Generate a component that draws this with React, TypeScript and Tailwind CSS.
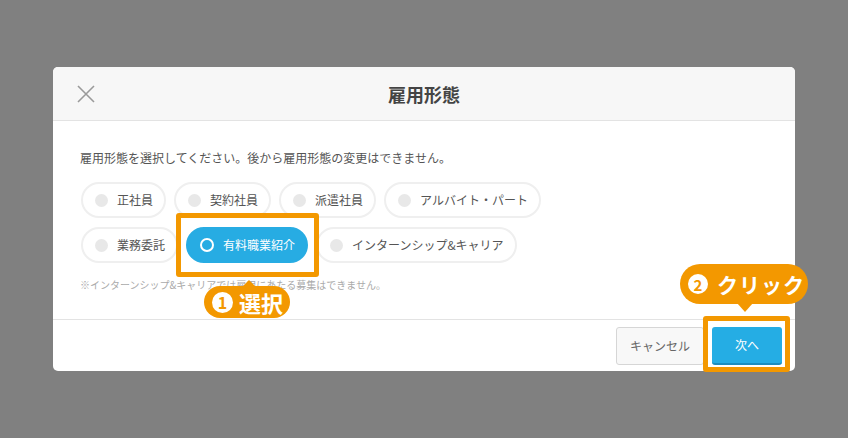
import React from "react";

const FONT = { fontFamily: '"Noto Sans CJK JP", "Noto Sans", sans-serif' };

function Pill({ label, selected = false }: { label: string; selected?: boolean }) {
  if (selected) {
    return (
      <div className="h-[36px] rounded-full border-2 border-[#27ace3] bg-[#27ace3] pl-[12px] pr-[11px] flex items-center gap-[9px] shrink-0">
        <span className="w-[14px] h-[14px] rounded-full border-2 border-white" />
        <span className="text-[12px] text-white whitespace-nowrap leading-none">{label}</span>
      </div>
    );
  }
  return (
    <div className="h-[36px] rounded-full border-2 border-[#efefef] bg-white pl-[12px] pr-[11px] flex items-center gap-[9px] shrink-0">
      <span className="w-[13px] h-[13px] rounded-full bg-[#e8e8e8]" />
      <span className="text-[12px] text-[#555] whitespace-nowrap leading-none">{label}</span>
    </div>
  );
}

export default function App() {
  return (
    <div className="relative w-[848px] h-[438px] bg-[#808080] overflow-hidden pt-[67px] pl-[53px]" style={FONT}>
      <div className="w-[742px] bg-white rounded-[5px] flex flex-col">
        {/* header */}
        <div className="h-[54px] bg-[#f7f7f7] border-b border-[#e3e3e3] rounded-t-[5px] grid grid-cols-[1fr_auto_1fr] items-center">
          <div className="pl-[24px] flex items-center">
            <svg width="18" height="18" viewBox="0 0 18 18" fill="none">
              <path d="M1 1L17 17M17 1L1 17" stroke="#9a9a9a" strokeWidth="1.6" />
            </svg>
          </div>
          <div className="text-[18px] font-bold text-[#444] leading-none">雇用形態</div>
          <div />
        </div>
        {/* body */}
        <div className="px-[27px] pt-[28px] pb-[27px] flex flex-col">
          <div className="text-[12px] leading-[18px] text-[#555]">雇用形態を選択してください。後から雇用形態の変更はできません。</div>
          <div className="mt-[15px] flex flex-col gap-[9px] pl-[1px]">
            <div className="flex gap-[8px]">
              <Pill label="正社員" />
              <Pill label="契約社員" />
              <Pill label="派遣社員" />
              <Pill label="アルバイト・パート" />
            </div>
            <div className="flex gap-[8px]">
              <Pill label="業務委託" />
              <Pill label="有料職業紹介" selected />
              <Pill label="インターンシップ&キャリア" />
            </div>
          </div>
          <div className="mt-[15px] text-[10px] leading-[14px] text-[#aaa]">※インターンシップ&キャリアでは雇用にあたる募集はできません。</div>
        </div>
        {/* footer */}
        <div className="h-[52px] border-t border-[#e3e3e3] flex justify-end items-center gap-[8px] pr-[13px] pt-[1px]">
          <div className="w-[88px] h-[38px] rounded-[3px] border border-[#d6d6d6] bg-[#f8f8f8] flex items-center justify-center text-[12px] text-[#666]">キャンセル</div>
          <div className="w-[70px] h-[38px] rounded-[3px] bg-[#25ade4] border-b-2 border-[#1b8dc0] flex items-center justify-center text-[12px] text-white">次へ</div>
        </div>
      </div>

      {/* annotation: selected box */}
      <div className="absolute left-[176px] top-[213px] w-[143px] h-[64px] border-[5px] border-[#f39800] rounded-[3px]" />
      {/* badge 1 */}
      <svg className="absolute left-[241px] top-[280px]" width="16" height="8" viewBox="0 0 16 8">
        <path d="M8 0L16 8H0Z" fill="#f39800" />
      </svg>
      <div className="absolute left-[204px] top-[286px] w-[86px] h-[32px] rounded-full bg-[#f39800] flex items-center pl-[8px] gap-[6px]">
        <span className="w-[21px] h-[21px] rounded-full bg-white flex items-center justify-center text-[16px] font-bold text-[#f39800] leading-none">1</span>
        <span className="text-[22px] font-bold text-white leading-none">選択</span>
      </div>

      {/* annotation: next box */}
      <div className="absolute left-[703px] top-[316px] w-[87px] h-[56px] border-[5px] border-[#f39800] rounded-[3px]" />
      {/* badge 2 */}
      <svg className="absolute left-[737px] top-[303px]" width="16" height="9" viewBox="0 0 16 9">
        <path d="M0 0H16L8 9Z" fill="#f39800" />
      </svg>
      <div className="absolute left-[680px] top-[264px] w-[128px] h-[40px] rounded-full bg-[#f39800] flex items-center pl-[8px] gap-[9px]">
        <span className="w-[20px] h-[20px] rounded-full bg-white flex items-center justify-center text-[15px] font-bold text-[#f39800] leading-none">2</span>
        <span className="text-[21px] font-bold text-white leading-none tracking-[1px]">クリック</span>
      </div>
    </div>
  );
}
